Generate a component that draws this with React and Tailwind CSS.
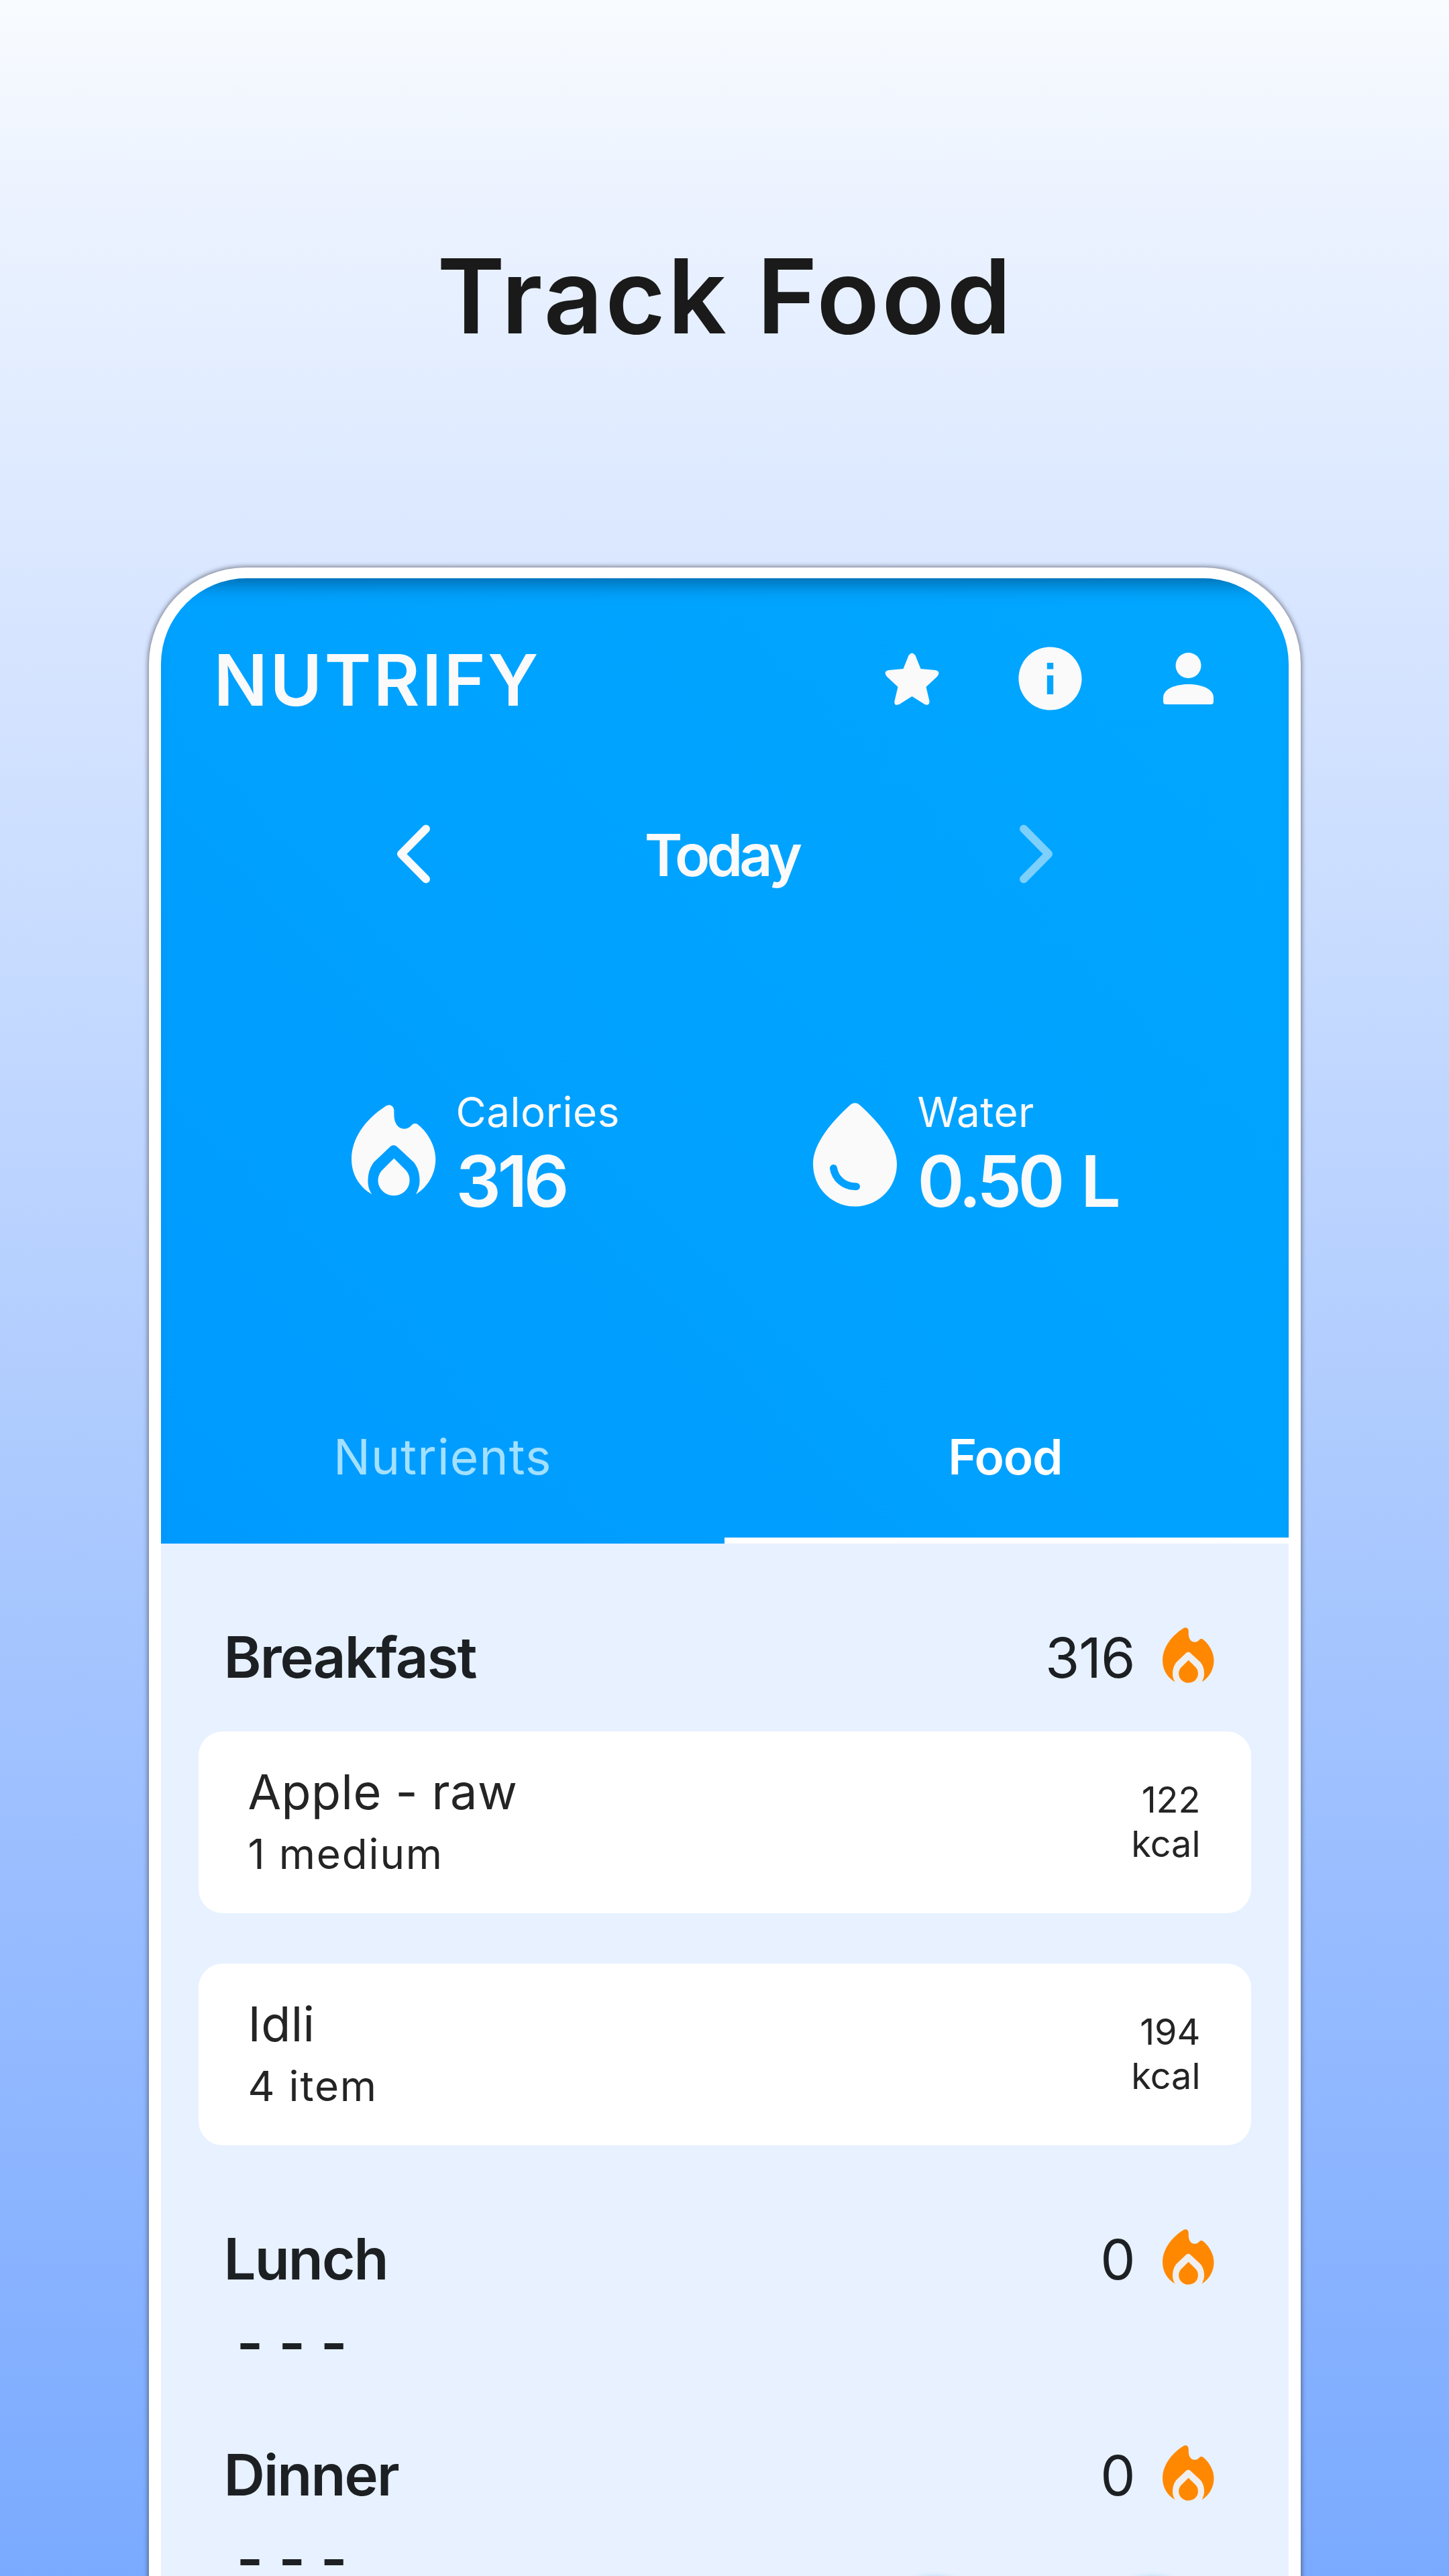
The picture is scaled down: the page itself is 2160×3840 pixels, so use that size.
import React from 'react';
import { MdInfo } from 'react-icons/md';

const meals = [
  {
    name: 'Breakfast',
    total: 316,
    items: [
      { name: 'Apple - raw', serving: '1 medium', kcal: 122 },
      { name: 'Idli', serving: '4 item', kcal: 194 },
    ],
  },
  { name: 'Lunch', total: 0, items: [] },
  { name: 'Dinner', total: 0, items: [] },
];

const FlameIcon = ({ className, gap = 'none' }) => (
  <svg viewBox="0 0 126 136" className={className} fill="currentColor">
    <path
      fill={gap}
      d="M30.4 133.3C26 127 24.5 120 24.5 114C24.5 103 27 94 33 85.7L58 62C61 59.5 64.5 59.5 67.5 62L93 85.7C99.5 94 101.6 103 101.6 114C101.6 120 99.5 127 96 133.3Z"
    />
    <path d="M49.4 3C55 -2 62 0 63.3 7.3L63.5 17C64 28 70 35.7 78 35.7C83 35.7 86 34 89 31C92.5 27 96.5 27 99.6 30C115 42 125.3 63 125.3 80.7C125.3 103 114 122 96 133.3C99.5 127 101.6 120 101.6 114C101.6 103 99.5 94 93 85.7L67.5 62C64.5 59.5 61 59.5 58 62L33 85.7C27 94 24.5 103 24.5 114C24.5 120 26 127 30.4 133.3C11 122 0 103 0 80.7C0 51 20 22 49.4 3Z" />
    <path d="M63.3 79.7L81.5 98C85 102 86.6 107 86.6 112.5C86.6 125 76 135.3 63 135.3C50 135.3 39.5 125 39.5 112.5C39.5 107 41.5 102 45 98Z" />
  </svg>
);

const DropIcon = ({ className }) => (
  <svg viewBox="0 0 125 155" className={className} fill="currentColor">
    <path d="M55 3.5C59.5 -1 65.5 -1 70 3.5C96 27 125 60 125 91C125 127 97 154.5 62.5 154.5C28 154.5 0 127 0 91C0 60 29 27 55 3.5Z" />
    <path d="M30.5 97.5C33 113 46 125 64.5 124.7" fill="none" stroke="#00a0ff" strokeWidth="11" strokeLinecap="round" />
  </svg>
);

const StarIcon = ({ className }) => (
  <svg viewBox="0 0 80 78" className={className} fill="currentColor">
    <path d="M27 24L35 4Q40 -3 45 4L53 24L75 26Q83 28 78 35L61 51L66 72Q66 80 59 77L40 65L21 77Q13 80 14 72L19 51L2 35Q-3 28 5 26Z" />
  </svg>
);

const PersonIcon = ({ className }) => (
  <svg viewBox="0 0 75 77" className={className} fill="currentColor">
    <circle cx="37.5" cy="19" r="19" />
    <path d="M0 67C0 53 20 47 37.5 47C55 47 75 53 75 67V73Q75 77 71 77H4Q0 77 0 73Z" />
  </svg>
);

const Chevron = ({ className }) => (
  <svg viewBox="0 0 51 88" className={className} fill="none" stroke="currentColor" strokeWidth="12" strokeLinecap="round" strokeLinejoin="round">
    <path d="M45 6.5L8 44L45 81.5" />
  </svg>
);

const Stat = ({ icon, label, value, className }) => (
  <div className={`flex ${className}`}>
    {icon}
    <div className="ml-[30px]">
      <div className="text-[62px] leading-[76px] tracking-[0.5px]">{label}</div>
      <div className="mt-[15px] text-[106px] leading-[100px] font-semibold tracking-[-5.5px] [word-spacing:8px]">{value}</div>
    </div>
  </div>
);

const FoodCard = ({ item }) => (
  <div className="flex h-[271px] items-center justify-between rounded-[36px] bg-white pr-[75px] pl-[74px] text-[#242424]">
    <div className="pb-1.5">
      <div className="text-[72px] leading-[100px] tracking-[0.4px]">{item.name}</div>
      <div className="text-[62px] leading-[86px] tracking-[1.8px]">{item.serving}</div>
    </div>
    <div className="pb-0.5 text-right text-[54px] leading-[66px]">
      <div>{item.kcal}</div>
      <div>kcal</div>
    </div>
  </div>
);

const MealSection = ({ meal }) => (
  <section className="px-14">
    <div className="flex h-[100px] items-center pr-[55px] pl-[38px]">
      <h2 className="text-[85px] font-semibold tracking-[-1.9px]">{meal.name}</h2>
      <span className="ml-auto text-[83px] tracking-[-1px]">{meal.total}</span>
      <FlameIcon className="mb-2 ml-[41px] h-[83px] w-[77px] text-[#ff8800]" gap="#efefef" />
    </div>
    {meal.items.length > 0 ? (
      <div className="mt-[60px] mb-[120px] flex flex-col gap-[75px]">
        {meal.items.map((item) => (
          <FoodCard key={item.name} item={item} />
        ))}
      </div>
    ) : (
      <div className="mt-[30px] h-[192px] pl-[57px] text-[86px] leading-[90px] font-semibold tracking-[0.5px]">- - -</div>
    )}
  </section>
);

const App = () => {
  return (
    <div className="flex h-[3840px] w-[2160px] flex-col items-center overflow-hidden bg-[linear-gradient(180deg,#f8fcff_0%,#edf3ff_7%,#e2edff_15%,#d6e4ff_25%,#cbdeff_34%,#bcd4ff_45%,#aecbfe_56%,#96bbff_76%,#7aaaff_100%)] font-['Inter',sans-serif]">
      <h1 className="mt-[341px] pl-0.5 text-[154px] leading-[200px] font-semibold tracking-[3.3px] text-[#1a1a1a]">Track Food</h1>

      <div className="mt-[305px] w-[1717px] shrink-0 rounded-t-[144px] bg-white px-[18px] pt-4 shadow-[0_0_6px_2px_rgba(60,60,70,0.55)]">
        <div className="relative h-[3000px] overflow-hidden rounded-t-[128px] bg-[#e7f1ff] text-[#1d2023]">
          <header className="flex h-[1439px] flex-col bg-[linear-gradient(225deg,#00a7ff_0%,#00a2ff_50%,#009aff_100%)] text-[#fafafa] shadow-[inset_0_28px_28px_-20px_rgba(0,50,90,0.55)]">
            <div className="mt-[93px] flex h-[113px] items-center pr-[112px] pl-[79px]">
              <span className="pt-1 text-[106px] leading-none font-semibold tracking-[3.2px]">NUTRIFY</span>
              <StarIcon className="ml-auto h-[78px] w-[81px]" />
              <MdInfo className="ml-[109px] size-[113px]" />
              <PersonIcon className="ml-[112px] h-[77px] w-[75px]" />
            </div>

            <div className="mt-[150px] flex h-[110px] items-center justify-between px-[350px]">
              <Chevron className="h-[88px] w-[51px]" />
              <span className="pt-1 pr-2 text-[86px] font-semibold tracking-[-4.8px]">Today</span>
              <Chevron className="h-[88px] w-[51px] rotate-180 opacity-50" />
            </div>

            <div className="mt-[292px] flex">
              <Stat className="pl-[284px]" icon={<FlameIcon className="mt-[27px] h-[136px] w-[126px]" />} label="Calories" value="316" />
              <Stat className="ml-auto pr-[255px]" icon={<DropIcon className="mt-[24px] h-[155px] w-[125px]" />} label="Water" value="0.50 L" />
            </div>

            <nav className="mt-auto grid h-[240px] grid-cols-2 text-center text-[73px]">
              <div className="pt-[66px] leading-[90px] tracking-[1.1px] text-[#a3e0ff]">Nutrients</div>
              <div className="border-b-[9px] border-white pt-[66px] pr-1 leading-[90px] font-semibold tracking-[-1.2px] text-white">Food</div>
            </nav>
          </header>

          <main className="pt-[120px]">
            {meals.map((meal) => (
              <MealSection key={meal.name} meal={meal} />
            ))}
          </main>

          {/* floating action buttons, just under the fold */}
          <div className="absolute top-[2979px] left-[1070px] size-[165px] rounded-full bg-[#00a2ff] shadow-[0_0_8px_rgba(0,140,220,0.25)]" />
          <div className="absolute top-[2979px] left-[1395px] size-[165px] rounded-full bg-[#00a2ff] shadow-[0_0_8px_rgba(0,140,220,0.25)]" />
        </div>
      </div>
    </div>
  );
};

export default App;
